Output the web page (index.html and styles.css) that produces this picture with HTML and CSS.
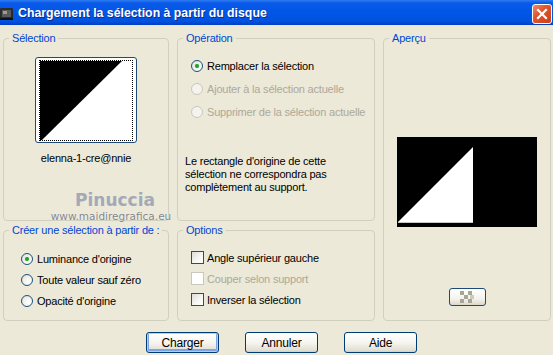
FILE: index.html
```html
<!DOCTYPE html>
<html lang="fr">
    <head>
        <meta charset="UTF-8">
        <title>Chargement la sélection à partir du disque</title>
        <link rel="stylesheet" href="styles.css">
    </head>
    <body>
        <div class="window">
            <div class="titlebar">
                <svg class="app-icon" width="14" height="14" viewBox="0 0 14 14">
                    <rect x="0" y="1" width="13" height="12" rx="1" fill="#2b2b2b"/>
                    <rect x="2" y="3" width="9" height="7" fill="#5a5a5a"/>
                    <rect x="3" y="4" width="4" height="3" fill="#9a9a9a"/>
                    <rect x="0" y="11" width="13" height="2" fill="#111"/>
                </svg>
                <span class="title">Chargement la sélection à partir du disque</span>
                <span class="close">
                    <svg width="12" height="12" viewBox="0 0 12 12">
                        <path d="M2 2 L10 10 M10 2 L2 10" stroke="#fff" stroke-width="2.2" stroke-linecap="square"/>
                    </svg>
                </span>
            </div>

            <div class="content">
                <div class="groups">
                    <section class="group g-selection">
                        <div class="legend">Sélection</div>
                        <div class="thumb">
                            <div class="thumb-focus">
                                <svg width="92" height="79" viewBox="0 0 92 79">
                                    <rect width="92" height="79" fill="#fff"/>
                                    <polygon points="0,0 82,0 2,79 0,79" fill="#000"/>
                                </svg>
                            </div>
                        </div>
                        <div class="caption">elenna-1-cre@nnie</div>
                    </section>

                    <section class="group g-operation">
                        <div class="legend">Opération</div>
                        <div class="rows op-rows">
                            <div class="row"><span class="radio checked"></span>Remplacer la sélection</div>
                            <div class="row disabled"><span class="radio"></span>Ajouter à la sélection actuelle</div>
                            <div class="row disabled"><span class="radio"></span>Supprimer de la sélection actuelle</div>
                        </div>
                        <p class="note">Le rectangle d'origine de cette<br>sélection ne correspondra pas<br>complètement au support.</p>
                    </section>

                    <section class="group g-preview">
                        <div class="legend">Aperçu</div>
                        <div class="preview">
                            <svg width="140" height="90" viewBox="0 0 140 90">
                                <rect width="140" height="90" fill="#000"/>
                                <polygon points="1,85 76,10 76,85" fill="#fff"/>
                                <rect x="1" y="85" width="75" height="1" fill="#c8c8c8"/>
                            </svg>
                        </div>
                        <div class="checker-btn">
                            <svg width="14" height="12" viewBox="0 0 14 12">
                                <rect x="0" y="0" width="4" height="4" fill="#a9a597"/>
                                <rect x="8" y="0" width="4" height="4" fill="#a9a597"/>
                                <rect x="4" y="4" width="4" height="4" fill="#a9a597"/>
                                <rect x="10" y="4" width="4" height="4" fill="#cfcbbd"/>
                                <rect x="0" y="8" width="4" height="4" fill="#a9a597"/>
                                <rect x="8" y="8" width="4" height="4" fill="#a9a597"/>
                            </svg>
                        </div>
                    </section>

                    <section class="group g-create">
                        <div class="legend">Créer une sélection à partir de :</div>
                        <div class="rows create-rows">
                            <div class="row"><span class="radio checked"></span>Luminance d'origine</div>
                            <div class="row"><span class="radio"></span>Toute valeur sauf zéro</div>
                            <div class="row"><span class="radio"></span>Opacité d'origine</div>
                        </div>
                    </section>

                    <section class="group g-options">
                        <div class="legend">Options</div>
                        <div class="rows opt-rows">
                            <div class="row"><span class="check"></span>Angle supérieur gauche</div>
                            <div class="row disabled"><span class="check"></span>Couper selon support</div>
                            <div class="row"><span class="check"></span>Inverser la sélection</div>
                        </div>
                    </section>
                </div>

                <div class="buttons">
                    <button class="btn default">Charger</button>
                    <button class="btn">Annuler</button>
                    <button class="btn">Aide</button>
                </div>
            </div>

            <div class="watermark">
                <div class="wm-name">Pinuccia</div>
                <div class="wm-site">www.maidiregrafica.eu</div>
            </div>
        </div>
    </body>
</html>
```

FILE: styles.css
```css
body { margin: 0; background: #ece9d8; }
.window { position: relative; width: 553px; height: 355px; overflow: hidden; background: #ece9d8; font-family: "Liberation Sans", Arial, sans-serif; font-size: 11px; letter-spacing: -0.2px; color: #000; }

/* title bar */
.titlebar { height: 25px; display: flex; align-items: center; background: linear-gradient(to bottom, #2f7cf2 0, #0a5ae9 3px, #0056e6 50%, #0052df 85%, #003fc4 100%); }
.app-icon { margin: 2px 4px 0 0; flex: none; }
.title { color: #fff; font-weight: bold; font-size: 12.3px; letter-spacing: 0; text-shadow: 1px 1px 0 #0c2d8a; padding-top: 1px; }
.close { margin-left: auto; margin-right: 1px; margin-top: 3px; width: 18px; height: 18px; border: 1px solid #fff; border-radius: 3px; display: flex; align-items: center; justify-content: center; background: linear-gradient(135deg, #ee8d6d 0, #e0552c 40%, #c8401a 100%); }

/* main area */
.content { padding: 13px 0 0 3px; }
.groups { display: grid; grid-template-columns: 166px 198px 168px; grid-template-rows: 183px 91px; column-gap: 8px; row-gap: 9px; }
.group { box-sizing: border-box; border: 1px solid #d0d0bf; border-radius: 4px; }
.legend { width: fit-content; white-space: nowrap; margin: -7px 0 0 5px; padding: 0 3px; line-height: 13px; color: #0046d5; background: #ece9d8; }
.g-preview { grid-column: 3; grid-row: 1 / 3; }
.g-create { grid-column: 1; grid-row: 2; }
.g-options { grid-column: 2; grid-row: 2; }

.thumb { width: 100px; height: 84px; margin: 12px auto 0; border: 1px solid #1e4a7a; border-radius: 3px; background: #fff; display: flex; align-items: center; justify-content: center; }
.thumb-focus { border: 1px dotted #000; display: flex; }
.caption { text-align: center; margin-top: 9px; line-height: 13px; }

.rows { display: flex; flex-direction: column; }
.row { display: flex; align-items: center; white-space: nowrap; }
.op-rows { padding-left: 13px; margin-top: 9px; }
.op-rows .row { height: 23px; }
.create-rows { padding-left: 17px; margin-top: 11px; }
.create-rows .row, .opt-rows .row { height: 21px; }
.opt-rows { padding-left: 13px; margin-top: 10px; }
.disabled { color: #aca899; }

.radio { box-sizing: border-box; width: 12px; height: 12px; border: 1px solid #1c5180; border-radius: 50%; background: radial-gradient(circle at 65% 65%, #fff 0, #f2f1ea 50%, #d8d5c8 100%); margin-right: 4px; display: flex; align-items: center; justify-content: center; }
.radio.checked::after { content: ""; width: 4px; height: 4px; border-radius: 50%; background: #23a12a; box-shadow: 0 0 1px #6cd46c; }
.disabled .radio { border-color: #cac8bb; background: #f4f3ee; }
.check { box-sizing: border-box; width: 13px; height: 13px; border: 1px solid #1c5180; background: linear-gradient(135deg, #dcdbd5 0, #f7f7f4 60%, #fff 100%); margin-right: 3px; }
.disabled .check { border-color: #cac8bb; background: #fff; }

.note { margin: 32px 0 0 7px; line-height: 13px; }

.preview { width: 140px; height: 90px; margin: 92px auto 0; display: flex; }
.checker-btn { box-sizing: border-box; width: 37px; height: 18px; margin: 61px auto 0; border: 1px solid #1e4a7a; border-radius: 3px; background: linear-gradient(to bottom, #fff 0, #f4f3ee 60%, #dcd8cb 100%); display: flex; align-items: center; justify-content: center; }

/* buttons */
.buttons { display: flex; gap: 26px; margin-top: 11px; padding-left: 143px; }
.btn { box-sizing: border-box; width: 73px; height: 21px; padding: 0; border: 1px solid #003c74; border-radius: 3px; background: linear-gradient(to bottom, #fff 0, #f6f5f0 50%, #e3e0d3 90%, #d6d0c0 100%); font-family: inherit; font-size: 12px; letter-spacing: -0.2px; color: #000; }
.btn.default { box-shadow: inset 0 0 0 1px #b5cdf3, inset 0 -1px 0 2px #7ea3e6; }

/* watermark over the left groups */
.watermark { position: absolute; left: 50px; top: 190px; text-align: center; width: 122px; pointer-events: none; letter-spacing: 0; }
.wm-name { font-family: "DejaVu Sans", sans-serif; font-size: 17px; font-weight: bold; color: #a4a9b9; margin-left: 8px; line-height: 20px; }
.wm-site { font-family: "DejaVu Sans", sans-serif; font-size: 10.5px; color: #85858a; line-height: 13px; text-shadow: 0 0 1px #fff; }
```
